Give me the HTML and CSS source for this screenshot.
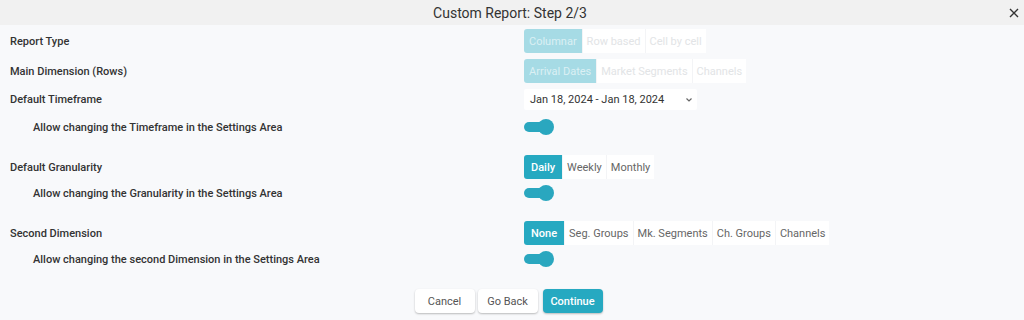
FILE: index.html
```html
<!DOCTYPE html>
<html lang="en">
<head>
    <meta charset="UTF-8">
    <title>Custom Report: Step 2/3</title>
    <link rel="stylesheet" href="styles.css">
</head>
<body>
    <div class="dialog">
        <div class="dialog-header">
            <span class="dialog-title">Custom Report: Step 2/3</span>
            <button class="close-btn" aria-label="Close">
                <svg width="10" height="10" viewBox="0 0 10 10"><path d="M1 1L9 9M9 1L1 9" stroke="#333" stroke-width="1.4" fill="none"/></svg>
            </button>
        </div>

        <div class="dialog-body">
            <div class="row">
                <span class="label">Report Type</span>
                <div class="segments disabled">
                    <button class="seg active">Columnar</button>
                    <button class="seg">Row based</button>
                    <button class="seg">Cell by cell</button>
                </div>
            </div>
            <div class="row">
                <span class="label">Main Dimension (Rows)</span>
                <div class="segments disabled">
                    <button class="seg active">Arrival Dates</button>
                    <button class="seg">Market Segments</button>
                    <button class="seg">Channels</button>
                </div>
            </div>
            <div class="row row-date">
                <span class="label">Default Timeframe</span>
                <div class="date-select">
                    <span>Jan 18, 2024 - Jan 18, 2024</span>
                    <svg width="8" height="6" viewBox="0 0 8 6"><path d="M1.5 1.5L4 4L6.5 1.5" stroke="#666" stroke-width="1.2" fill="none"/></svg>
                </div>
            </div>
            <div class="row row-toggle">
                <span class="label sub">Allow changing the Timeframe in the Settings Area</span>
                <span class="toggle on"></span>
            </div>

            <div class="row">
                <span class="label">Default Granularity</span>
                <div class="segments">
                    <button class="seg active">Daily</button>
                    <button class="seg">Weekly</button>
                    <button class="seg">Monthly</button>
                </div>
            </div>
            <div class="row row-toggle">
                <span class="label sub">Allow changing the Granularity in the Settings Area</span>
                <span class="toggle on"></span>
            </div>

            <div class="row">
                <span class="label">Second Dimension</span>
                <div class="segments">
                    <button class="seg active">None</button>
                    <button class="seg">Seg. Groups</button>
                    <button class="seg">Mk. Segments</button>
                    <button class="seg">Ch. Groups</button>
                    <button class="seg">Channels</button>
                </div>
            </div>
            <div class="row row-toggle">
                <span class="label sub">Allow changing the second Dimension in the Settings Area</span>
                <span class="toggle on"></span>
            </div>

            <div class="actions">
                <button class="btn">Cancel</button>
                <button class="btn">Go Back</button>
                <button class="btn primary">Continue</button>
            </div>
        </div>
    </div>
</body>
</html>
```

FILE: styles.css
```css
* {
    margin: 0;
    padding: 0;
    box-sizing: border-box;
}

body {
    font-family: Roboto, 'Liberation Sans', sans-serif;
    background-color: #f8f9fb;
    color: #333;
    width: 1024px;
    height: 320px;
    overflow: hidden;
}

.dialog-header {
    height: 25px;
    background-color: #f1f1f1;
    display: flex;
    align-items: center;
    justify-content: center;
    position: relative;
    padding-right: 4px;
}

.dialog-title {
    font-size: 14px;
    color: #333;
}

.close-btn {
    position: absolute;
    right: 5px;
    top: 8px;
    border: none;
    background: none;
    width: 10px;
    height: 10px;
    display: flex;
}

.dialog-body {
    padding: 4px 0 0 10px;
}

.row {
    display: grid;
    grid-template-columns: 514px auto;
    align-items: center;
    height: 24px;
    margin-bottom: 6px;
}

.row-date {
    height: 21px;
    margin-top: 1px;
    margin-bottom: 9px;
}

.row-toggle {
    height: 16px;
    margin-bottom: 20px;
}

.label {
    font-size: 11px;
    font-weight: 500;
    color: #333;
}

.label.sub {
    padding-left: 23px;
}

.segments {
    display: flex;
    height: 24px;
}

.seg {
    font-family: inherit;
    font-size: 11px;
    border: none;
    background-color: #fff;
    color: #666;
    padding: 0 4px;
    height: 24px;
    border-right: 1px solid #f3f4f6;
}

.seg:last-child {
    border-right: none;
}

.seg.active {
    background-color: #26a9c1;
    color: #fff;
    font-weight: 500;
    border-radius: 3px 0 0 3px;
    padding: 0 7px;
}

.segments.disabled .seg {
    color: #e2e4e6;
}

.segments.disabled .seg.active {
    background-color: #a6dbe5;
    color: #dbf0f4;
    font-weight: 400;
    padding: 0 5px;
}

.date-select {
    width: 173px;
    height: 21px;
    background-color: #fff;
    display: flex;
    align-items: center;
    justify-content: space-between;
    padding: 0 4px 0 6px;
    font-size: 11px;
    color: #333;
    border-radius: 2px;
}

.toggle {
    display: block;
    position: relative;
    width: 30px;
    height: 16px;
}

.toggle::before {
    content: "";
    position: absolute;
    left: 0;
    top: 3px;
    width: 26px;
    height: 10px;
    border-radius: 5px;
    background-color: #2aa7bf;
}

.toggle::after {
    content: "";
    position: absolute;
    right: 0;
    top: 0;
    width: 16px;
    height: 16px;
    border-radius: 50%;
    background-color: #2aa7bf;
}

.actions {
    display: flex;
    justify-content: center;
    gap: 3px;
    padding-top: 2px;
    padding-right: 17px;
}

.btn {
    font-family: inherit;
    font-size: 11px;
    height: 24px;
    min-width: 60px;
    padding: 0 8px;
    border: none;
    border-radius: 4px;
    background-color: #fff;
    color: #555;
    box-shadow: 0 1px 2px rgba(0, 0, 0, 0.25);
}

.btn.primary {
    background-color: #26a9c1;
    color: #fff;
    font-weight: 500;
    margin-left: 2px;
    padding: 0 6px;
}
```
